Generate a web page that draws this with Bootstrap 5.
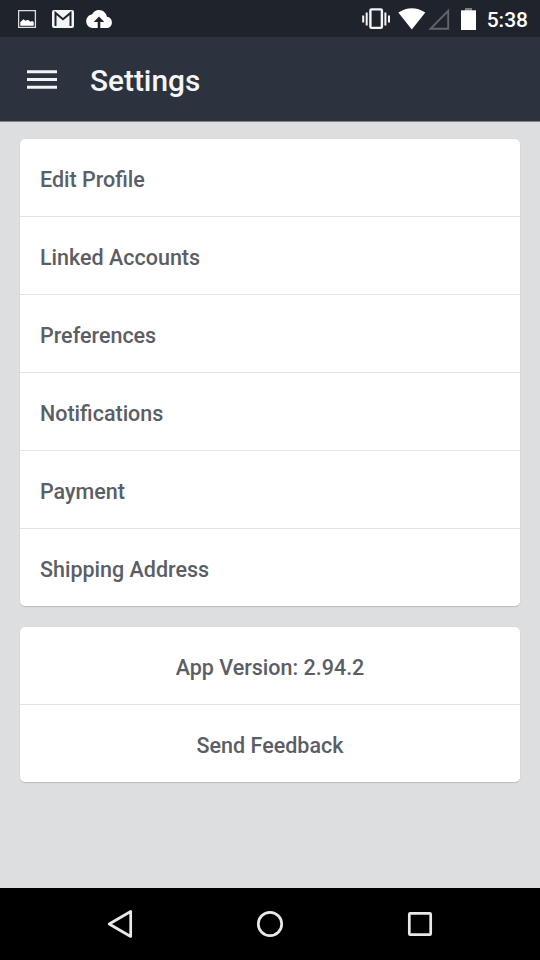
<!DOCTYPE html>
<html lang="en">
<head>
<meta charset="utf-8">
<meta name="viewport" content="width=device-width, initial-scale=1">
<title>Settings</title>
<link rel="stylesheet" href="https://cdn.jsdelivr.net/npm/bootstrap@5.3.0/dist/css/bootstrap.min.css">
<style>
body { font-family: Roboto, "Noto Sans", sans-serif; font-weight: 500; background: #dddee0; }
svg { display: block; flex: none; }
.status-bar { height: 37px; background: #1f232b; padding: 0 12px 0 18px; }
.status-left { gap: 12px; }
.clock { font-size: 21px; line-height: 35px; margin-left: 11px; padding-top: 3px; }
.app-bar { height: 85px; background: #2d333e; border-bottom: 1px solid #7f838a; padding: 2px 27px 0; }
.app-title { font-size: 29.8px; line-height: 36px; font-weight: 500; margin-left: 33px; padding-top: 2px; color: #f4f5f6; }
.content { padding: 17px 20px 0; gap: 21px; }
.panel { --bs-list-group-border-radius: 5px; --bs-list-group-border-color: #e3e4e6; --bs-list-group-color: #5b5e65; box-shadow: 0 1px 1px rgba(0,0,0,.14), 0 0 1px rgba(0,0,0,.12); border-radius: 5px; }
.panel .list-group-item { border-width: 0 0 1px; height: 78px; padding: 4px 20px 0; font-size: 21.5px; line-height: 28px; }
.panel .list-group-item:last-child { border-bottom: 0; height: 77px; }
.nav-keys { height: 72px; background: #000; padding: 0 105px; }
</style>
<script src="https://cdn.jsdelivr.net/npm/bootstrap@5.3.0/dist/js/bootstrap.bundle.min.js"></script>
</head>
<body class="vh-100 d-flex flex-column overflow-hidden">
<div class="status-bar d-flex align-items-center justify-content-between text-white">
  <div class="status-left d-flex align-items-center">
    <svg width="22" height="37" viewBox="18 0 22 37"><path d="M18.600 10.600h16.800v16.800H18.600z" fill="none" stroke="#dcdddf" stroke-width="1.300"/><path d="M20.300 25.700v-3.500l3-3 2.200 1.600 2.500-1 2.500 2 1.700-.8 1.500 1v3.700z" fill="#fff"/></svg>
    <svg width="22" height="37" viewBox="52 0 22 37"><rect x="52" y="10" width="22" height="18" rx="2" fill="#f4f4f5"/><path d="M55.500 26V13l7.500 6.300 7.500-6.300v13" fill="none" stroke="#1f232b" stroke-width="2"/><path d="M57 10h12l-6 5z" fill="#f4f4f5"/></svg>
    <svg width="28" height="37" viewBox="86 0 28 37"><path d="M19.350 10.040C18.670 6.590 15.640 4 12 4 9.110 4 6.600 5.640 5.350 8.040 2.340 8.360 0 10.910 0 14c0 3.310 2.690 6 6 6h13c2.760 0 5-2.240 5-5 0-2.640-2.050-4.780-4.650-4.960z" fill="#fff" transform="translate(86.200 5.600) scale(1.070 1.120)"/><path d="M99 16.500l5.300 5.500h-4V28h-2.600v-6h-4z" fill="#1f232b"/></svg>
  </div>
  <div class="d-flex align-items-center">
    <svg width="114" height="37" viewBox="362 0 114 37">
      <rect x="370.400" y="9.400" width="11.500" height="18.500" rx="1.200" fill="none" stroke="#f4f4f5" stroke-width="2.400"/>
      <path d="M363.200 15.500v7M366.700 12.500v13M385.400 12.500v13M389 15.500v7" stroke="#f4f4f5" stroke-width="2"/>
      <path d="M398.300 12.600Q412 3.800 425.300 12.600L411.800 29.500z" fill="#fff"/>
      <path d="M448.200 10.800V28.700H430.600z" fill="none" stroke="#63666b" stroke-width="1.900"/>
      <path d="M465 8h7v3h-7z" fill="#7b7e82"/><path d="M461 10.300h15V30h-15z" fill="#fff"/>
    </svg>
    <span class="clock">5:38</span>
  </div>
</div>
<nav class="app-bar d-flex align-items-center text-white">
  <svg width="30" height="20" viewBox="0 0 30 20"><path d="M0 1.800h30M0 9.500h30M0 17.200h30" stroke="#f1f5f5" stroke-width="3"/></svg>
  <h1 class="app-title mb-0">Settings</h1>
</nav>
<main class="content d-flex flex-column flex-grow-1">
  <div class="panel list-group">
    <a class="list-group-item d-flex align-items-center">Edit Profile</a>
    <a class="list-group-item d-flex align-items-center">Linked Accounts</a>
    <a class="list-group-item d-flex align-items-center">Preferences</a>
    <a class="list-group-item d-flex align-items-center">Notifications</a>
    <a class="list-group-item d-flex align-items-center">Payment</a>
    <a class="list-group-item d-flex align-items-center">Shipping Address</a>
  </div>
  <div class="panel list-group">
    <div class="list-group-item d-flex align-items-center justify-content-center">App Version: 2.94.2</div>
    <a class="list-group-item d-flex align-items-center justify-content-center">Send Feedback</a>
  </div>
</main>
<footer class="nav-keys d-flex align-items-center justify-content-between">
  <svg width="30" height="30" viewBox="0 0 30 30" fill="none" stroke="#e9e9e9" stroke-width="2.700" stroke-linejoin="round"><path d="M25.700 2.500v25L4.200 15z"/></svg>
  <svg width="30" height="30" viewBox="0 0 30 30" fill="none" stroke="#e9e9e9" stroke-width="2.700"><circle cx="15" cy="15" r="11.700"/></svg>
  <svg width="30" height="30" viewBox="0 0 30 30" fill="none" stroke="#e9e9e9" stroke-width="2.700"><rect x="4.300" y="4.300" width="21.400" height="21.400" rx="1"/></svg>
</footer>
</body>
</html>
